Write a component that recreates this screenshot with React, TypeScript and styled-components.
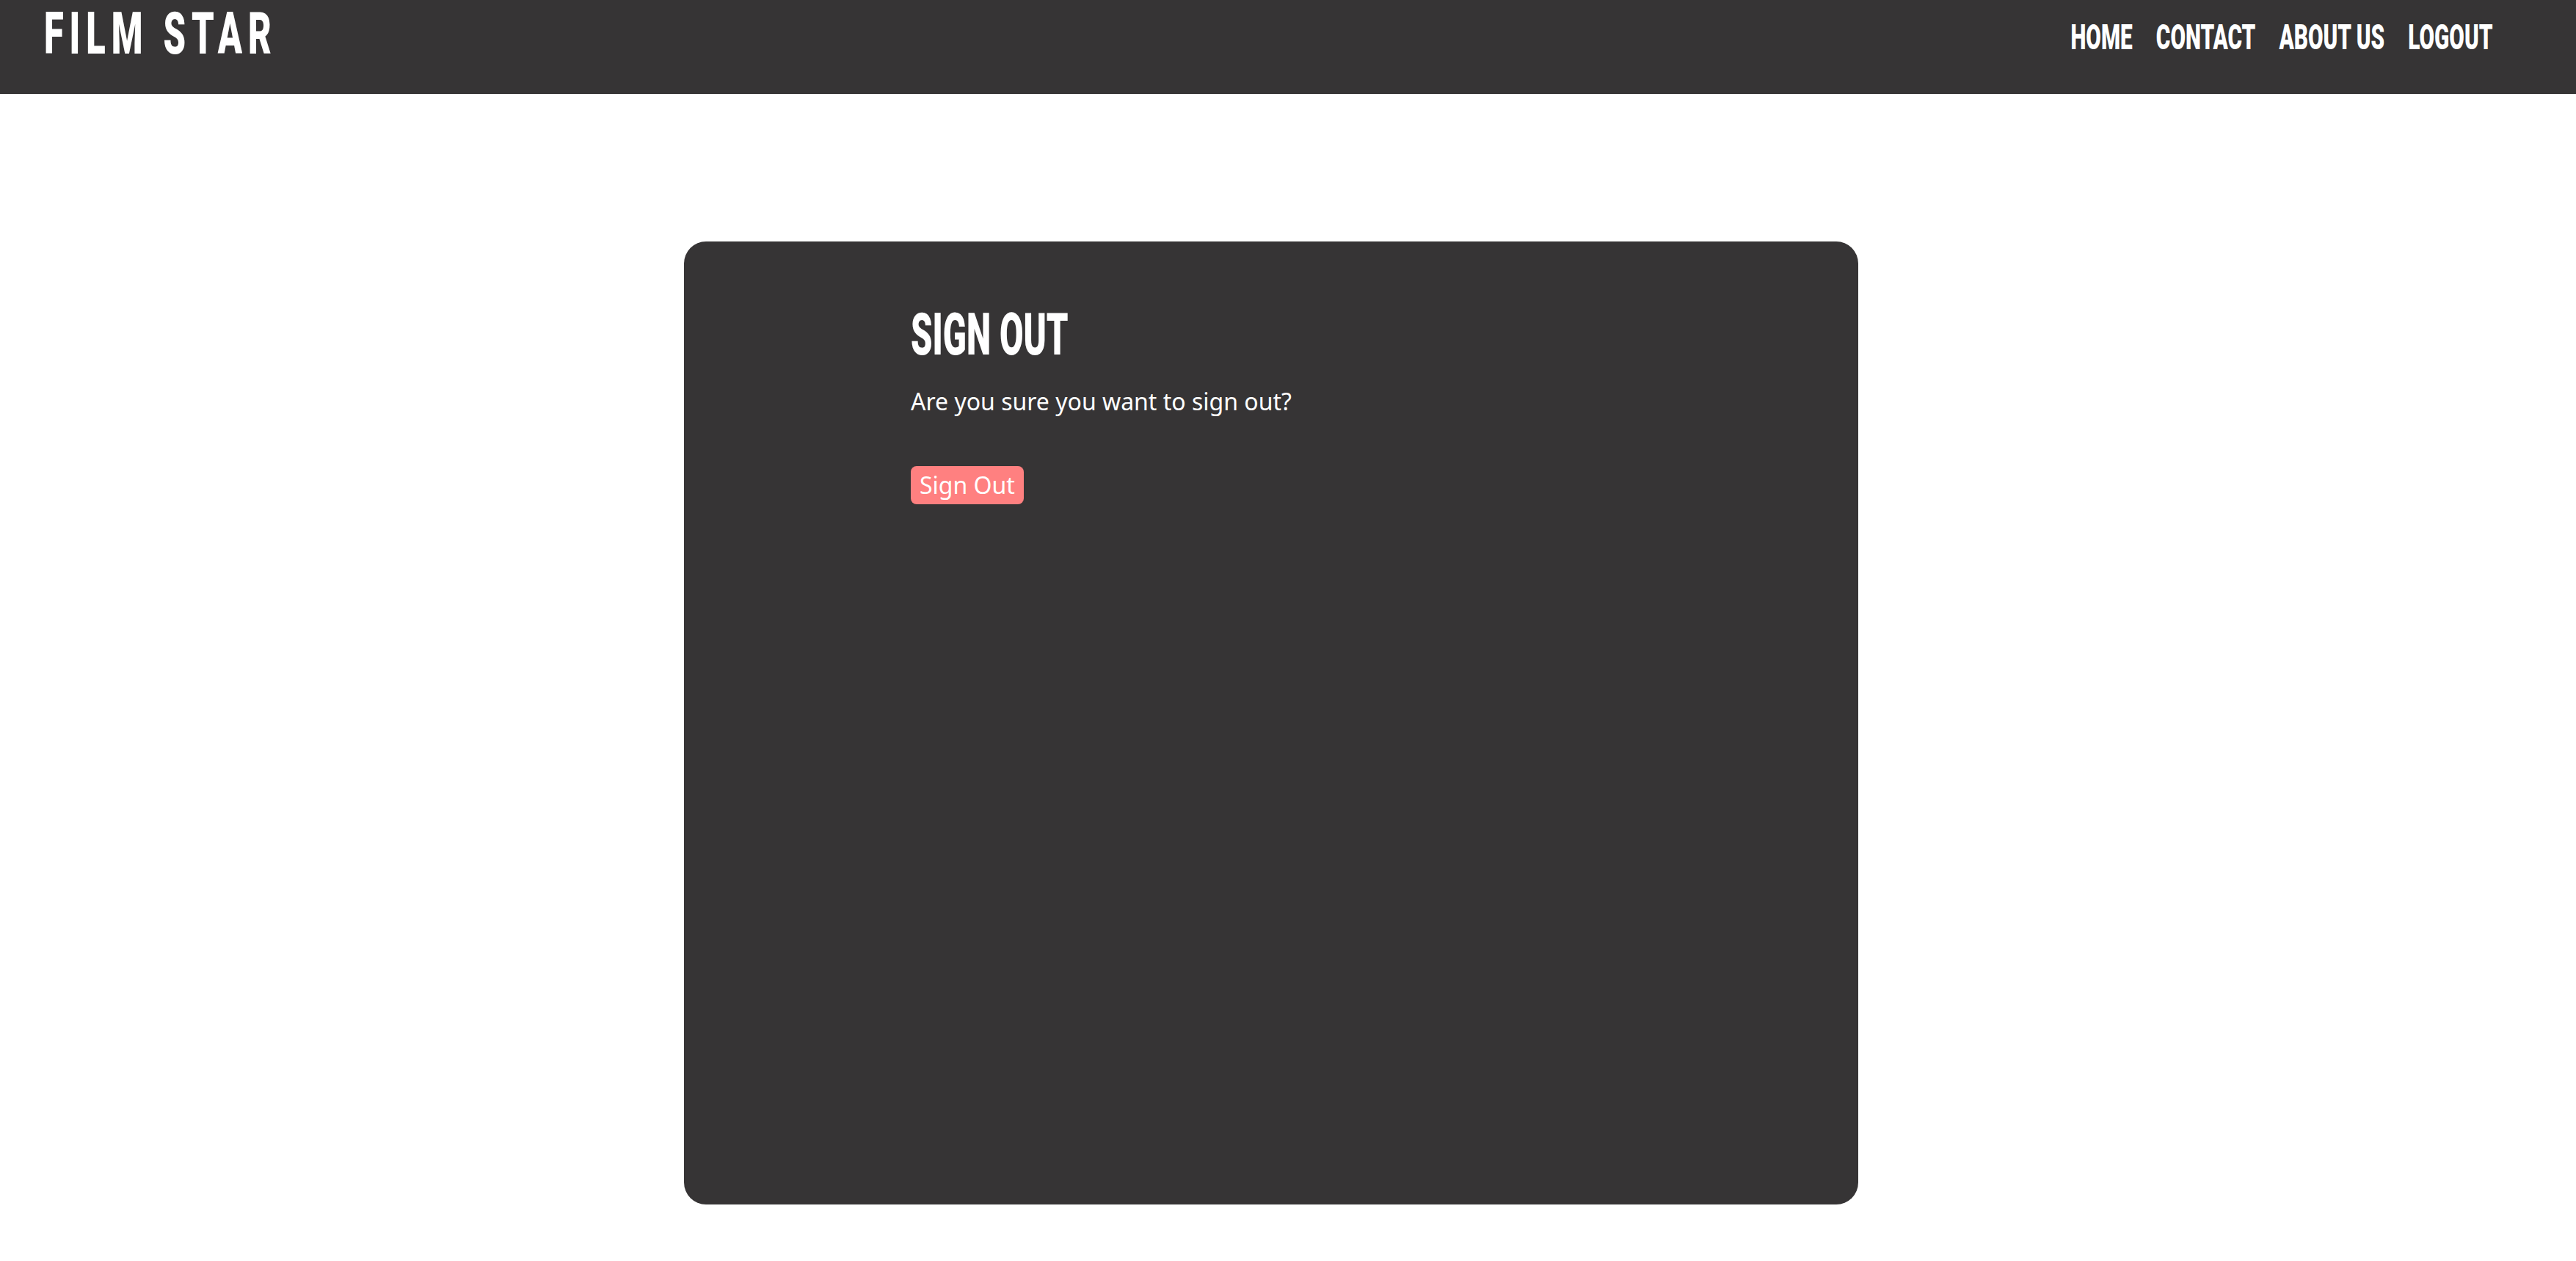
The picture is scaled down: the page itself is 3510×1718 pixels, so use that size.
import styled, { createGlobalStyle } from 'styled-components';

const GlobalStyle = createGlobalStyle`
	html,
	body {
		margin: 0;
		padding: 0;
		background: #ffffff;
		font-family: 'Noto Sans', 'Open Sans', sans-serif;
	}
`;

const navLinks = ['Home', 'Contact', 'About Us', 'Logout'];

const App = () => {
	return (
		<>
			<GlobalStyle />
			<Header>
				<Logo>Film Star</Logo>
				<Nav>
					{navLinks.map((link) => (
						<NavLink key={link} href='#'>
							{link}
						</NavLink>
					))}
				</Nav>
			</Header>
			<Main>
				<Card>
					<Title>Sign Out</Title>
					<Message>Are you sure you want to sign out?</Message>
					<SignOutButton type='button'>Sign Out</SignOutButton>
				</Card>
			</Main>
		</>
	);
};

const Header = styled.header`
	display: flex;
	justify-content: space-between;
	align-items: flex-start;
	height: 128px;
	padding: 0 114px 0 60px;
	box-sizing: border-box;
	background: #363435;
	overflow: hidden;
`;

// display face is condensed, so squeeze a heavy sans horizontally
const Logo = styled.div`
	margin-top: 6px;
	font-family: Roboto, 'DejaVu Sans', sans-serif;
	font-weight: 900;
	font-size: 80px;
	line-height: 80px;
	letter-spacing: 13px;
	text-transform: uppercase;
	color: #ffffff;
	white-space: nowrap;
	transform: scaleX(0.61);
	transform-origin: left center;
`;

const Nav = styled.nav`
	display: flex;
	gap: 52px;
	margin-top: 27px;
	transform: scaleX(0.62);
	transform-origin: right center;
`;

const NavLink = styled.a`
	font-family: Roboto, 'DejaVu Sans', sans-serif;
	font-weight: 900;
	font-size: 48px;
	line-height: 48px;
	text-transform: uppercase;
	text-decoration: none;
	color: #ffffff;
	white-space: nowrap;
`;

const Main = styled.main`
	padding: 201px 0 77px;
`;

const Card = styled.section`
	width: 1600px;
	height: 1312px;
	margin-left: calc(50% - 823px);
	padding: 87px 0 0 309px;
	box-sizing: border-box;
	background: #363435;
	border-radius: 30px;
	color: #ffffff;
`;

const Title = styled.h1`
	margin: 0;
	font-family: Roboto, 'DejaVu Sans', sans-serif;
	font-weight: 900;
	font-size: 80px;
	line-height: 80px;
	text-transform: uppercase;
	transform: scaleX(0.59);
	transform-origin: left center;
`;

const Message = styled.p`
	margin: 29px 0 65px;
	font-size: 32px;
	line-height: 1.4;
`;

const SignOutButton = styled.button`
	display: block;
	height: 52px;
	padding: 0 12px;
	border: none;
	border-radius: 8px;
	background: #ff8080;
	color: #ffffff;
	font-family: 'Noto Sans', 'Open Sans', sans-serif;
	font-size: 32px;
	line-height: 52px;
	cursor: pointer;
`;

export default App;
